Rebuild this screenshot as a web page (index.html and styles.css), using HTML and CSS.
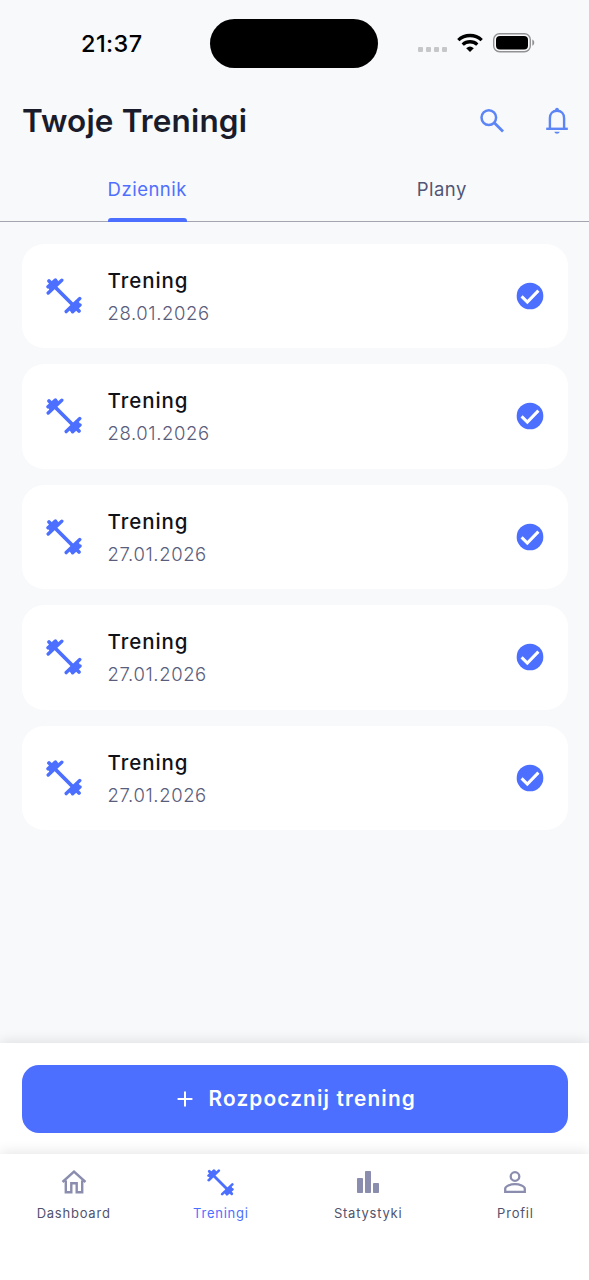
FILE: index.html
```html
<!DOCTYPE html>
<html lang="pl">
<head>
<meta charset="utf-8">
<title>Twoje Treningi</title>
<link rel="stylesheet" href="styles.css">
</head>
<body>
<svg class="defs" width="0" height="0" aria-hidden="true">
  <symbol id="barbell" viewBox="0 0 36 36"><g fill="none" stroke="currentColor" stroke-linecap="round" stroke-linejoin="round"><path stroke-width="3.8" d="M3 3 33 33"/><path stroke-width="3.400" d="M2.200 15 15.800 2.200M2 8.800 9.400 2M20.200 33.600 33.800 20.600M26.600 33.800 34 27"/><path stroke-width="5" d="M4.800 9.600 10.400 4.400M25.600 31.400 31.400 25.900"/></g></symbol>
  <symbol id="check" viewBox="0 0 24 24"><path fill="currentColor" d="M12 2a10 10 0 1 0 0 20 10 10 0 0 0 0-20z"/><path d="m5.700 12.300 4.300 4.200L18.300 8" fill="none" stroke="#fff" stroke-width="2.300"/></symbol>
</svg>
<div class="screen">
  <div class="status">
    <div class="time">21:37</div>
    <div class="island"></div>
    <div class="indicators">
      <div class="dots"><i></i><i></i><i></i><i></i></div>
      <svg class="wifi" viewBox="0 0 26 19"><g fill="none" stroke="#000" stroke-width="3.3"><path d="M1.3 7.1a17.2 17.2 0 0 1 23.4 0"/><path d="M5.7 11.6a10.8 10.8 0 0 1 14.6 0"/></g><path d="M9.2 15.2a5.7 5.7 0 0 1 7.6 0L13 19z"/></svg>
      <svg class="battery" viewBox="0 0 42 20"><rect x=".7" y=".7" width="36.6" height="18" rx="5.8" fill="none" stroke="#929294" stroke-width="1.4"/><rect x="3" y="3" width="32" height="13.4" rx="4"/><path d="M39.3 6.6c2.6 1 2.6 5.2 0 6.200z" fill="#929294"/></svg>
    </div>
  </div>
  <header class="header">
    <h1>Twoje Treningi</h1>
    <svg class="search" viewBox="0 0 24 24"><g fill="none" stroke="currentColor" stroke-width="2.500"><circle cx="8.800" cy="8.600" r="7.300"/><path d="m14 13.600 9 9" stroke-width="2.800"/></g></svg>
    <svg class="bell" viewBox="0 0 24 28"><g fill="none" stroke="currentColor" stroke-width="2.400"><path d="M1.200 21.800h21.600"/><path d="M4.900 22v-10.800c0-4.400 2.800-7.500 7.100-7.500s7.100 3.100 7.100 7.500V22"/></g><circle cx="12" cy="2.600" r="1.900" fill="currentColor"/><path d="M9.300 24.700h5.400c-.8 2.600-4.600 2.600-5.400 0z" fill="currentColor"/></svg>
  </header>
  <nav class="tabs"><div class="tab active"><span>Dziennik</span></div><div class="tab"><span>Plany</span></div></nav>
  <main class="list">
    <article class="card"><svg class="barbell"><use href="#barbell"/></svg><div class="info"><h2>Trening</h2><p>28.01.2026</p></div><svg class="check"><use href="#check"/></svg></article>
    <article class="card"><svg class="barbell"><use href="#barbell"/></svg><div class="info"><h2>Trening</h2><p>28.01.2026</p></div><svg class="check"><use href="#check"/></svg></article>
    <article class="card"><svg class="barbell"><use href="#barbell"/></svg><div class="info"><h2>Trening</h2><p>27.01.2026</p></div><svg class="check"><use href="#check"/></svg></article>
    <article class="card"><svg class="barbell"><use href="#barbell"/></svg><div class="info"><h2>Trening</h2><p>27.01.2026</p></div><svg class="check"><use href="#check"/></svg></article>
    <article class="card"><svg class="barbell"><use href="#barbell"/></svg><div class="info"><h2>Trening</h2><p>27.01.2026</p></div><svg class="check"><use href="#check"/></svg></article>
  </main>
  <section class="action"><button class="start"><svg class="plus" viewBox="0 0 16 16"><path d="M8 .6v14.800M.6 8h14.800" stroke="#fff" stroke-width="2"/></svg><span>Rozpocznij trening</span></button></section>
  <nav class="bottom">
    <div class="item"><svg viewBox="0 0 32 32"><path fill="none" stroke="currentColor" stroke-width="2.400" d="M4.500 16 16 5.600 27.500 16M7.800 14.500v11.700h5.500v-9h5.400v9h5.500V14.500"/></svg><span>Dashboard</span></div>
    <div class="item active"><svg class="small-barbell"><use href="#barbell"/></svg><span>Treningi</span></div>
    <div class="item"><svg viewBox="0 0 32 32"><g fill="currentColor"><rect x="5" y="12" width="6" height="15" rx=".8"/><rect x="13" y="5" width="6" height="22" rx=".8"/><rect x="21" y="17" width="6" height="10" rx=".8"/></g></svg><span>Statystyki</span></div>
    <div class="item"><svg viewBox="0 0 32 32"><g fill="none" stroke="currentColor" stroke-width="2.300"><circle cx="16" cy="10.500" r="4.300"/><path d="M6.200 25.900v-3.100c0-2.600 5.200-4.600 9.800-4.600s9.800 2 9.800 4.600v3.100z"/></g></svg><span>Profil</span></div>
  </nav>
</div>
</body>
</html>
```

FILE: styles.css
```css
* { box-sizing: border-box; }
body, h1, h2, p { margin: 0; }
body { font-family: Inter, "Liberation Sans", sans-serif; background: #f8f9fb; }
svg { display: block; flex: none; }
.defs { position: absolute; }
.screen { width: 589px; height: 1280px; display: flex; flex-direction: column; overflow: hidden; }
.status { height: 86px; display: grid; grid-template-columns: 210.400px 168px 1fr; align-items: start; }
.time { padding: 30px 0 0 81px; font-size: 23.500px; line-height: 28px; font-weight: 500; letter-spacing: .4px; }
.island { margin-top: 19px; height: 49px; border-radius: 25px; background: #000; }
.indicators { display: flex; padding: 33px 0 0 39.600px; }
.dots { display: flex; gap: 3px; margin: 14px 10px 0 0; }
.dots i { width: 5px; height: 5px; border-radius: 1px; background: #c6c7c9; }
.wifi { width: 26px; height: 19px; margin-right: 10px; }
.battery { width: 42px; height: 20px; }
.header { height: 68px; display: flex; align-items: center; padding: 1px 20px 0 22px; color: #5c85f6; }
h1 { flex: 1; color: #1a1c2b; font-size: 31.500px; line-height: 38px; font-weight: 600; letter-spacing: .15px; }
.search { width: 24px; height: 24px; margin-right: 41px; }
.bell { width: 24px; height: 28px; }
.tabs { height: 68px; display: flex; border-bottom: 1px solid #a3a4ae; }
.tab { flex: 1; display: flex; justify-content: center; color: #515575; font-size: 18.500px; line-height: 24px; letter-spacing: .5px; font-weight: 400; }
.tab span { height: 68px; padding-top: 23px; }
.tab.active { color: #4f6fff; }
.tab.active span { position: relative; }
.tab.active span::after { content: ""; position: absolute; left: 0; right: 0; bottom: 0; height: 4px; border-radius: 3px 3px 0 0; background: #4c6fff; }
.list { flex: 1; display: flex; flex-direction: column; gap: 16px; padding: 21.600px 21.500px 0; }
.card { height: 104.500px; border-radius: 22px; background: #fff; display: flex; align-items: center; padding: 0 22px 0 24.500px; color: #4c6fff; }
.barbell { width: 36px; height: 36px; margin-right: 25.500px; }
.info { flex: 1; }
h2 { color: #111218; font-size: 20.500px; line-height: 30px; font-weight: 500; letter-spacing: .95px; }
.info p { color: #5a5d7b; font-size: 18.500px; line-height: 26px; margin-top: 4px; letter-spacing: .6px; font-weight: 300; }
.check { width: 32px; height: 32px; }
.action { height: 111px; background: #fff; padding: 22px 21.500px 0; box-shadow: 0 -2px 12px rgba(0,0,0,.1); }
.start { border: 0; width: 100%; height: 68px; border-radius: 17px; background: #4c6fff; color: #fff; display: flex; align-items: center; justify-content: center; gap: 15.500px; padding: 0 4px 0 8px; font: 600 20.800px/30px Inter, sans-serif; letter-spacing: 1.150px; }
.plus { width: 16px; height: 16px; }
.bottom { height: 126px; background: #fff; box-shadow: 0 -2px 12px rgba(0,0,0,.1); display: grid; grid-template-columns: repeat(4, 1fr); z-index: 1; }
.item { display: flex; flex-direction: column; align-items: center; color: #8b8dae; padding-top: 12px; }
.item svg { width: 32px; height: 32px; }
.item .small-barbell { width: 27px; height: 27px; margin: 2.500px 0; }
.item span { color: #51536d; font-size: 13px; line-height: 18px; margin-top: 6px; letter-spacing: .77px; }
.item.active, .item.active span { color: #4c6fff; }
```
